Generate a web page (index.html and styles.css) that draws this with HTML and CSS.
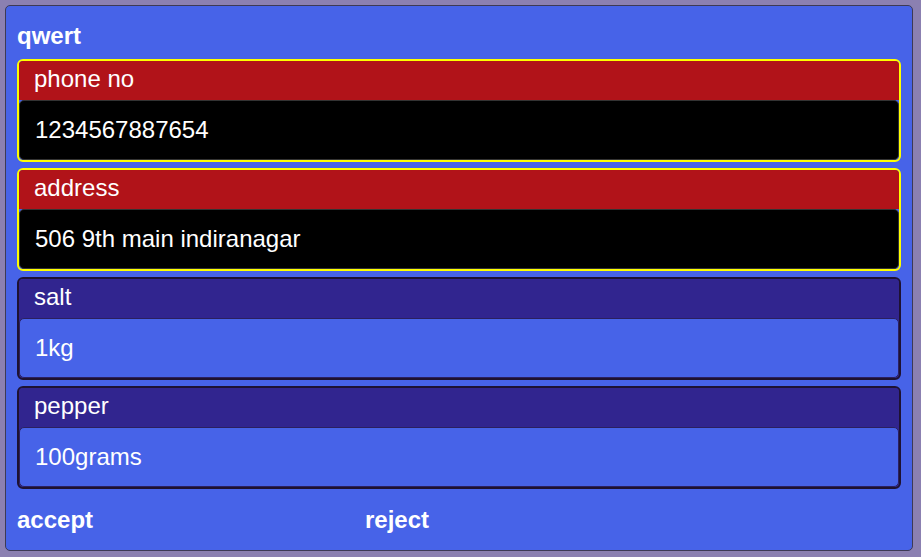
FILE: index.html
```html
<!DOCTYPE html>
<html>
<head>
<meta charset="utf-8">
<link rel="stylesheet" href="styles.css">
</head>
<body>
<div class="panel">
  <div class="title">qwert</div>
  <div class="list">
    <div class="field field-alert">
      <div class="field-head">phone no</div>
      <div class="field-body">1234567887654</div>
    </div>
    <div class="field field-alert">
      <div class="field-head">address</div>
      <div class="field-body">506 9th main indiranagar</div>
    </div>
    <div class="field field-item">
      <div class="field-head">salt</div>
      <div class="field-body">1kg</div>
    </div>
    <div class="field field-item">
      <div class="field-head">pepper</div>
      <div class="field-body">100grams</div>
    </div>
  </div>
  <div class="actions">
    <div class="action">accept</div>
    <div class="action">reject</div>
  </div>
</div>
</body>
</html>
```

FILE: styles.css
```css
html, body {
  margin: 0;
  padding: 0;
}
body {
  background: #8b80b1;
  padding: 5px 8px 6px 5px;
  font-family: "Liberation Sans", Arial, sans-serif;
  color: #ffffff;
  font-size: 24px;
}
.panel {
  box-sizing: border-box;
  height: 546px;
  background: #4763e8;
  border: 1px solid #3d3a55;
  border-radius: 5px;
  padding: 16px 11px 0 11px;
}
.title {
  font-weight: bold;
  line-height: 27px;
  height: 27px;
  margin-bottom: 10px;
}
.list {
  display: flex;
  flex-direction: column;
  gap: 6px;
}
.field {
  border: 2px solid #ffff00;
  border-radius: 6px;
  overflow: hidden;
}
.field-head {
  height: 39px;
  box-sizing: border-box;
  padding: 4px 15px 0 15px;
  line-height: 27px;
}
.field-body {
  height: 60px;
  box-sizing: border-box;
  border: 1px solid #2a2a2a;
  border-radius: 5px;
  padding: 0 15px 1px 15px;
  display: flex;
  align-items: center;
  line-height: 27px;
}
.field-alert {
  border-color: #ffff00;
}
.field-alert .field-head {
  background: #b11319;
}
.field-alert .field-body {
  background: #000000;
  border-color: #333333;
}
.field-item {
  border-color: #1e1232;
  background: #31258f;
}
.field-item .field-head {
  background: #31258f;
}
.field-item .field-body {
  background: #4763e8;
  border-color: #2b2060;
}
.actions {
  display: grid;
  grid-template-columns: 348px auto;
  margin-top: 17px;
}
.action {
  font-weight: bold;
  line-height: 27px;
}
```
